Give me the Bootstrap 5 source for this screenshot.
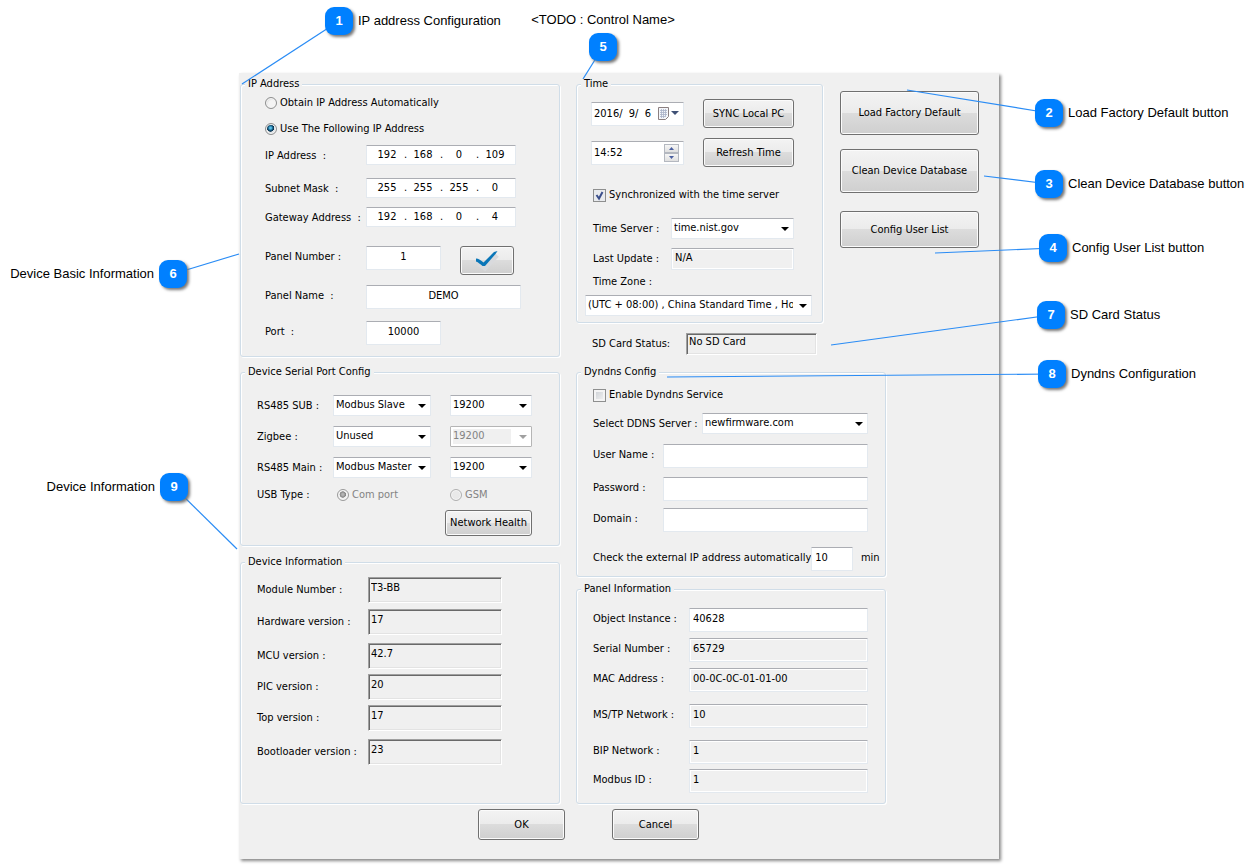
<!DOCTYPE html>
<html lang="en">
<head>
<meta charset="utf-8">
<meta name="viewport" content="width=device-width, initial-scale=1">
<title>Device Configuration</title>
<link href="https://cdn.jsdelivr.net/npm/bootstrap@5.3.0/dist/css/bootstrap.min.css" rel="stylesheet">
<style>
  body { background: #fff; color: #000; font: 11px/22px "DejaVu Sans Condensed", "Noto Sans", sans-serif; }

  /* Page: notes left and right of the dialog, shares of the window width */
  .stage { display: grid; grid-template-columns: 239fr 760fr 259fr; padding: 73px 0 9px; }
  .dialog { grid-column: 2; background: #f0f0f0; box-shadow: 2px 2px 3px #888; padding: 4px 0 19px 1px; }
  .cols { display: grid; grid-template-columns: 320fr 16fr 423fr; }
  .upper { display: grid; grid-template-columns: 247fr 176fr; }
  .lower { width: 73.2%; }

  /* Group boxes */
  fieldset { --pad: 16px; display: grid; align-content: start; align-items: start; border: 1px solid #d0dde8; border-radius: 3px; box-shadow: 1px 1px 0 #fff, inset 1px 1px 0 #fff; }
  legend { float: none; width: auto; margin: 0 0 0 calc(4px - var(--pad)); padding: 0 3px; font-size: 11px; line-height: 14px; background: #f0f0f0; }
  .full { grid-column: 1 / -1; }
  .g-ip { --pad: 24px; grid-template: 26px 27px 33px 29px 39px 39px 36px 35px / 101px 94px 1fr; padding: 1px 44px 0 var(--pad); }
  .g-serial { grid-template: 31px 31px 27px 26px 35px / 76px 117px 82px; padding: 16px 0 0 var(--pad); margin-top: 8px; }
  .g-device { grid-template: 32px 34px 31px 31px 34px 64px / 111px 134px; padding: 8px 0 0 var(--pad); margin-top: 9px; line-height: 26px; }
  .g-time { --pad: 8px; grid-template: 39px 46px 34px 30px 23px 24px 27px / 6px 80px 32px 91px 1fr; padding: 8px 10px 0 var(--pad); }
  .g-ddns { grid-template: 29px 31px 33px 31px 39px 29px / 70px 39px 1fr 12px; padding: 5px 5px 0 var(--pad); }
  .g-panel { grid-template: 30px 30px 36px 36px 29px 34px / 96px 1fr; padding: 12px 17px 0 var(--pad); margin-top: 5px; }
  .c12 { grid-column: 1 / 3; }
  .c23 { grid-column: 2 / 4; }
  .c34 { grid-column: 3 / 5; }
  .sd { height: 42px; padding-left: 16px; }
  .sd label { width: 94px; }
  .sd .sunk { width: 131px; height: 22px; }

  /* Edit boxes */
  .box { display: block; width: 100%; height: 24px; padding: 0 3px 3px 3px; font: inherit; line-height: 18px; color: #000; background: #fff; border: 1px solid #e3e9ef; border-top-color: #abadb3; border-radius: 1px; outline: 0; }
  .box.low { height: 22px; }
  .box[readonly] { background: #f0f0f0; box-shadow: inset 0 0 0 1px #fff; }
  .sunk { display: block; width: 100%; height: 26px; padding: 0 1px 6px 2px; font: inherit; line-height: 16px; color: #000; background: #f0f0f0; border: 1px solid #fff; border-top-color: #a0a0a0; border-left-color: #a0a0a0; box-shadow: inset 1px 1px 0 #696969, inset -1px -1px 0 #e3e3e3; outline: 0; }
  .w-num { width: 75px; }
  .w-name { width: 155px; }
  .w-ip { width: 150px; }
  .ip { height: 20px; padding: 0 3px; }
  .ip input { min-width: 0; width: 34px; padding: 0; border: 0; outline: 0; background: none; font: inherit; color: #000; text-align: center; }
  .ip span { width: 2px; }

  /* Drop-downs */
  .drop { display: block; width: 100%; height: 21px; padding: 0 18px 1px 2px; font: inherit; line-height: 18px; color: #000; border: 1px solid #e3e9ef; border-top-color: #abadb3; border-radius: 1px; -webkit-appearance: none; appearance: none; overflow: hidden; white-space: nowrap;
    background: #fff url("data:image/svg+xml,%3Csvg xmlns='http://www.w3.org/2000/svg' width='8' height='4'%3E%3Cpath d='M0 0h8L4 4z'/%3E%3C/svg%3E") no-repeat right 4px center; }
  .drop:disabled { opacity: 1; color: #838383; border-color: #b5b5b5; background: url("data:image/svg+xml,%3Csvg xmlns='http://www.w3.org/2000/svg' width='8' height='4'%3E%3Cpath d='M0 0h8L4 4z' fill='%23a0a0a0'/%3E%3C/svg%3E") no-repeat right 4px center, linear-gradient(#f0f0f0, #f0f0f0) no-repeat 2px 2px / 58px 15px, #fff; }
  .w-port { width: 98px; }

  /* Push buttons */
  .push { display: flex; align-items: center; justify-content: center; padding: 0; font: inherit; line-height: 16px; color: #000; white-space: nowrap; border: 1px solid #707070; border-radius: 3px; background: linear-gradient(#f3f3f3, #ebebeb 50%, #dcdcdc 50%, #cfcfcf); box-shadow: inset 0 0 0 1px #fbfbfb; }
  .h-26 { height: 26px; }
  .h-29 { height: 29px; }
  .h-31 { height: 31px; width: 87px; }
  .h-44 { height: 44px; }
  .h-37 { height: 37px; }
  .w-apply { width: 54px; }
  .actions { display: grid; align-content: start; align-items: start; grid-template-rows: 58px 62px 37px; padding: 14px 20px 0 17px; }
  .footer-row { gap: 47px; padding: 5px 0 0 238px; }

  /* Radios and tick boxes */
  .dot, .tick { flex: none; width: 12px; height: 12px; margin: 0; -webkit-appearance: none; appearance: none; border: 1px solid #8e8f8f; }
  .dot { border-radius: 50%; background: radial-gradient(circle at 60% 60%, #f4f4f4 40%, #c8c8c8); box-shadow: inset 0 0 0 1px #f6f6f6; }
  .dot:checked { background: radial-gradient(circle at 45% 40%, #58c3ee 0 10%, #12577d 30%, #0b2f4a 42%, #dfe3e6 48%); }
  .dot:disabled { border-color: #b0b0b0; background: #e9e9e9; }
  .dot:disabled:checked { border-color: #9a9a9a; background: radial-gradient(circle at 48% 45%, #b5b5b5 0 12%, #858585 38%, #f2f2f2 46%); }
  .tick { width: 13px; height: 13px; background: linear-gradient(135deg, #c9cdd2, #f5f5f5); box-shadow: inset 0 0 0 2px #f4f4f4; }
  .tick:checked { background: url("data:image/svg+xml,%3Csvg xmlns='http://www.w3.org/2000/svg' width='11' height='11'%3E%3Cpath d='M2.500 5l2.500 3.500L8.500 2' fill='none' stroke='%233b4f8c' stroke-width='2'/%3E%3C/svg%3E") no-repeat center, #e9ebee; box-shadow: none; }
  .opt { display: flex; align-items: center; gap: 3px; }
  .off { color: #838383; }

  /* Date and time pickers */
  .pick { width: 93px; flex: none; padding: 0 4px 0 2px; }
  .pick input { min-width: 0; width: 64px; padding: 0; border: 0; outline: 0; background: none; font: inherit; color: #000; white-space: pre; }
  .pick button { padding: 0; border: 0; background: none; line-height: 0; }
  .pick .spin { width: 15px; }
  .pick .spin button { width: 15px; height: 9px; border: 1px solid #b4b8c0; background: linear-gradient(#f6f6f6, #e0e0e0); }

  /* Numbered notes pinned over the screen */
  .lines { position: absolute; left: 0; top: 0; width: 100%; height: 868px; pointer-events: none; }
  .lines line { stroke: #2a8cf5; stroke-width: 1.200px; vector-effect: non-scaling-stroke; }
  .note { position: absolute; left: calc(var(--x) / 1258 * 100%); top: calc(var(--y) * 1px); font: 13px/28px "Liberation Sans", Arial, sans-serif; white-space: nowrap; }
  .note b { display: block; width: 28px; height: 28px; margin: -14px; border-radius: 9px; background: #0080ff; color: #fff; text-align: center; box-shadow: 2px 2px 3px #777; }
  .note span { position: absolute; top: -14px; left: 19px; }
  .note.lead-in span { left: auto; right: 19px; }
  .note.over span { top: -41px; left: 0; transform: translateX(-50%); }
</style>
</head>
<body>
<div class="position-relative">
<main class="stage">
<form class="dialog">
  <div class="cols">
    <div>
      <fieldset class="g-ip">
        <legend>IP Address</legend>
        <label class="full opt"><input type="radio" class="dot" name="ipmode">Obtain IP Address Automatically</label>
        <label class="full opt"><input type="radio" class="dot" name="ipmode" checked>Use The Following IP Address</label>
        <label for="ip1">IP Address&nbsp; :</label>
        <div class="box ip w-ip d-flex align-items-center"><input id="ip1" value="192"><span>.</span><input aria-label="Octet 2" value="168"><span>.</span><input aria-label="Octet 3" value="0"><span>.</span><input aria-label="Octet 4" value="109"></div><i></i>
        <label for="sn1">Subnet Mask&nbsp; :</label>
        <div class="box ip w-ip d-flex align-items-center"><input id="sn1" value="255"><span>.</span><input aria-label="Octet 2" value="255"><span>.</span><input aria-label="Octet 3" value="255"><span>.</span><input aria-label="Octet 4" value="0"></div><i></i>
        <label for="gw1">Gateway Address&nbsp; :</label>
        <div class="box ip w-ip d-flex align-items-center"><input id="gw1" value="192"><span>.</span><input aria-label="Octet 2" value="168"><span>.</span><input aria-label="Octet 3" value="0"><span>.</span><input aria-label="Octet 4" value="4"></div><i></i>
        <label for="pnum">Panel Number :</label><input id="pnum" class="box w-num text-center" value="1">
        <button type="button" class="push h-29 w-apply" aria-label="Apply"><svg width="28" height="22" viewBox="0 0 28 22"><path d="M6 14l6 4 12-13" fill="none" stroke="#d9dadd" stroke-width="5"/><path d="M3 8.500c2.500 0 5 2 7.500 4L21 2l3.500-1-2 3L12 16h-2.500C7 14 5.500 12.500 3 11.500z" fill="#0a76b8"/></svg></button>
        <label for="pname">Panel Name&nbsp; :</label><input id="pname" class="box w-name text-center" value="DEMO"><i></i>
        <label for="port">Port&nbsp; :</label><input id="port" class="box w-num text-center" value="10000">
      </fieldset>

      <fieldset class="g-serial">
        <legend>Device Serial Port Config</legend>
        <label for="s1">RS485 SUB :</label><select id="s1" class="drop w-port"><option>Modbus Slave</option></select><select class="drop" aria-label="RS485 SUB baud rate"><option>19200</option></select>
        <label for="s2">Zigbee :</label><select id="s2" class="drop w-port"><option>Unused</option></select><select class="drop" aria-label="Zigbee baud rate" disabled><option>19200</option></select>
        <label for="s3">RS485 Main :</label><select id="s3" class="drop w-port"><option>Modbus Master</option></select><select class="drop" aria-label="RS485 Main baud rate"><option>19200</option></select>
        <span>USB Type :</span>
        <label class="off opt ps-1"><input type="radio" class="dot" name="usb" checked disabled>Com port</label>
        <label class="off opt"><input type="radio" class="dot" name="usb" disabled>GSM</label>
        <div class="full d-flex justify-content-end"><button type="button" class="push h-26 px-1">Network Health</button></div>
      </fieldset>

      <fieldset class="g-device">
        <legend>Device Information</legend>
        <label for="d1">Module Number :</label><input id="d1" class="sunk" readonly value="T3-BB">
        <label for="d2">Hardware version :</label><input id="d2" class="sunk" readonly value="17">
        <label for="d3">MCU version :</label><input id="d3" class="sunk" readonly value="42.7">
        <label for="d4">PIC version :</label><input id="d4" class="sunk" readonly value="20">
        <label for="d5">Top version :</label><input id="d5" class="sunk" readonly value="17">
        <label for="d6">Bootloader version :</label><input id="d6" class="sunk" readonly value="23">
      </fieldset>
    </div>
    <i></i>
    <div>
      <div class="upper">
        <fieldset class="g-time">
          <legend>Time</legend>
          <i></i><div class="h-29 d-flex align-items-center"><div class="box pick d-flex align-items-center justify-content-between"><input aria-label="Date" value="2016/  9/  6"><button type="button" aria-label="Open calendar"><svg width="21" height="14" viewBox="0 0 21 14"><path d="M.5.500h10v9l-3 3h-7z" fill="#f4f6fa" stroke="#8b7f80"/><path d="M2 3.500h7M2 5.500h7M2 7.500h7M2 9.500h5M3.500 2v9M5.500 2v9M7.500 2v8" stroke="#a9b2c8" stroke-width=".8"/><path d="M13 4h8l-4 4z" fill="#3f5075"/></svg></button></div></div><i></i>
          <button type="button" class="push h-29">SYNC Local PC</button><i></i>
          <i></i><div class="h-29 d-flex align-items-center"><div class="box pick d-flex align-items-center justify-content-between"><input aria-label="Time" value="14:52"><div class="spin d-flex flex-column"><button type="button" class="d-flex align-items-center justify-content-center" aria-label="Later"><svg width="5" height="3"><path d="M0 3h5L2.500 0z" fill="#4a5fa0"/></svg></button><button type="button" class="d-flex align-items-center justify-content-center" aria-label="Earlier"><svg width="5" height="3"><path d="M0 0h5L2.500 3z" fill="#4a5fa0"/></svg></button></div></div></div><i></i>
          <button type="button" class="push h-29">Refresh Time</button><i></i>
          <label class="full opt ps-2"><input type="checkbox" class="tick" checked>Synchronized with the time server</label>
          <label class="c12 ps-2" for="srv">Time Server :</label><select id="srv" class="drop c34"><option>time.nist.gov</option></select><i></i>
          <label class="c12 ps-2" for="upd">Last Update :</label><input id="upd" class="box low c34" readonly value="N/A"><i></i>
          <label class="full ps-2" for="zone">Time Zone :</label>
          <select id="zone" class="drop full"><option>(UTC + 08:00) , China Standard Time , Hotmail</option></select>
        </fieldset>
        <div class="actions">
          <button type="button" class="push h-44">Load Factory Default</button>
          <button type="button" class="push h-44">Clean Device Database</button>
          <button type="button" class="push h-37">Config User List</button>
        </div>
      </div>
      <div class="sd d-flex align-items-center"><label for="sd">SD Card Status:</label><input id="sd" class="sunk" readonly value="No SD Card"></div>
      <div class="lower">
        <fieldset class="g-ddns">
          <legend>Dyndns Config</legend>
          <label class="full opt"><input type="checkbox" class="tick">Enable Dyndns Service</label>
          <label for="ddns" class="c12">Select DDNS Server :</label><select id="ddns" class="drop"><option>newfirmware.com</option></select><i></i>
          <label for="user">User Name :</label><input id="user" class="box c23"><i></i>
          <label for="pass">Password :</label><input id="pass" type="password" class="box c23"><i></i>
          <label for="dom">Domain :</label><input id="dom" class="box c23"><i></i>
          <div class="full d-flex text-nowrap"><label for="chk">Check the external IP address automatically</label><input id="chk" class="box flex-fill" size="1" value="10"><span class="ps-2">min</span></div>
        </fieldset>
        <fieldset class="g-panel">
          <legend>Panel Information</legend>
          <label for="p1">Object Instance :</label><input id="p1" class="box" value="40628">
          <label for="p2">Serial Number :</label><input id="p2" class="box" readonly value="65729">
          <label for="p3">MAC Address :</label><input id="p3" class="box" readonly value="00-0C-0C-01-01-00">
          <label for="p4">MS/TP Network :</label><input id="p4" class="box" readonly value="10">
          <label for="p5">BIP Network :</label><input id="p5" class="box" readonly value="1">
          <label for="p6">Modbus ID :</label><input id="p6" class="box" readonly value="1">
        </fieldset>
      </div>
    </div>
  </div>
  <div class="footer-row d-flex">
    <button type="button" class="push h-31">OK</button>
    <button type="button" class="push h-31">Cancel</button>
  </div>
</form>
</main>

<svg class="lines" viewBox="0 0 1258 868" preserveAspectRatio="none" aria-hidden="true">
  <line x1="339" y1="21" x2="242" y2="84"/>
  <line x1="603" y1="47" x2="583" y2="79"/>
  <line x1="173" y1="274" x2="239" y2="254"/>
  <line x1="174" y1="487" x2="237" y2="549"/>
  <line x1="1049" y1="113" x2="907" y2="90"/>
  <line x1="1049" y1="184" x2="984" y2="176"/>
  <line x1="1053" y1="248" x2="935" y2="253"/>
  <line x1="1051" y1="315" x2="831" y2="345"/>
  <line x1="1052" y1="374" x2="667" y2="377"/>
</svg>
<div class="note" style="--x:339;--y:21"><b>1</b><span>IP address Configuration</span></div>
<div class="note" style="--x:1049;--y:113"><b>2</b><span>Load Factory Default button</span></div>
<div class="note" style="--x:1049;--y:184"><b>3</b><span>Clean Device Database button</span></div>
<div class="note" style="--x:1053;--y:248"><b>4</b><span>Config User List button</span></div>
<div class="note over" style="--x:603;--y:47"><b>5</b><span>&lt;TODO : Control Name&gt;</span></div>
<div class="note lead-in" style="--x:173;--y:274"><b>6</b><span>Device Basic Information</span></div>
<div class="note" style="--x:1051;--y:315"><b>7</b><span>SD Card Status</span></div>
<div class="note" style="--x:1052;--y:374"><b>8</b><span>Dyndns Configuration</span></div>
<div class="note lead-in" style="--x:174;--y:487"><b>9</b><span>Device Information</span></div>
</div>
<script src="https://cdn.jsdelivr.net/npm/bootstrap@5.3.0/dist/js/bootstrap.bundle.min.js"></script>
</body>
</html>
